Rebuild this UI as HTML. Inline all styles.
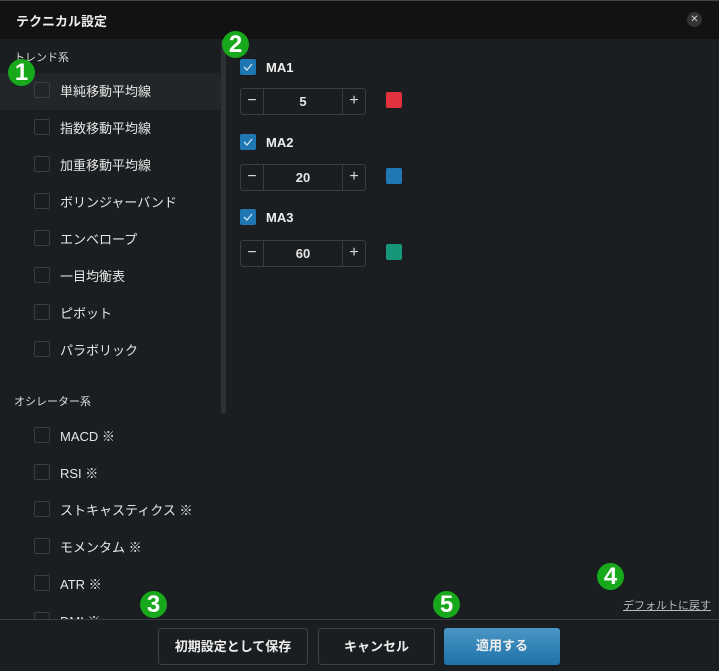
<!DOCTYPE html><html><head><meta charset="utf-8"><style>
*{box-sizing:border-box;margin:0;padding:0}
body{width:719px;height:671px;background:#1b1e20;font-family:"Liberation Sans","Noto Sans CJK JP",sans-serif;color:#e6e6e6;position:relative;overflow:hidden;font-size:13px}
.hdr{position:absolute;left:0;top:0;width:719px;height:39px;background:#121212;border-top:1px solid #444}
.hdr .t{position:absolute;left:16px;top:10px;font-size:13px;font-weight:bold;color:#eee}
.x{position:absolute;left:687px;top:11px;width:15px;height:15px;border-radius:50%;background:#333;color:#ccc;font-size:10px;line-height:15px;text-align:center}
.sec{position:absolute;left:14px;font-size:11px;color:#ddd}
.row{position:absolute;left:0;width:221px;height:37px}
.row .cb{position:absolute;left:34px;top:9px;width:16px;height:16px;border:1px solid #3a3d40;border-radius:2px}
.row .l{position:absolute;left:60px;top:8px;font-size:13px;color:#e6e6e6}
.sb{position:absolute;left:221px;top:40px;width:5px;height:373px;background:#2e3133}
.ck{position:absolute;left:240px;width:16px;height:16px;background:#1f78b4;border-radius:2px}
.ck svg{position:absolute;left:3px;top:3px}
.ma{position:absolute;left:266px;font-size:13px;font-weight:bold;color:#eee}
.st{position:absolute;left:240px;width:126px;height:27px;border:1px solid #3a3d40;border-radius:3px}
.st .m,.st .p{position:absolute;top:0;width:23px;height:25px;line-height:24px;text-align:center;font-size:16px;color:#ddd}
.st .m{left:0;border-right:1px solid #3a3d40}.st .p{right:0;border-left:1px solid #3a3d40}
.st .v{position:absolute;left:23px;right:23px;top:0;line-height:25px;text-align:center;font-weight:bold;font-size:13px}
.sw{position:absolute;left:386px;width:16px;height:16px;border-radius:2px}
.ft{position:absolute;left:0;top:619px;width:719px;height:52px;background:#1b1e20;border-top:1px solid #3a3d40}
.btn{position:absolute;top:628px;height:37px;border:1px solid #3f4245;border-radius:3px;line-height:35px;text-align:center;font-weight:bold;font-size:13px;color:#eee}
.g{position:absolute;width:27px;height:27px;border-radius:50%;background:#17a81c;color:#fff;font-weight:bold;font-size:24px;line-height:27px;text-align:center}
.df{position:absolute;left:623px;top:597px;font-size:11px;color:#bbb;text-decoration:underline}
</style></head><body>
<div class="hdr"><div class="t">テクニカル設定</div><div class="x">✕</div></div>
<div class="sec" style="top:49px">トレンド系</div>
<div class="row" style="top:73px;background:#232628"><div class="cb"></div><div class="l">単純移動平均線</div></div>
<div class="row" style="top:110px"><div class="cb"></div><div class="l">指数移動平均線</div></div>
<div class="row" style="top:147px"><div class="cb"></div><div class="l">加重移動平均線</div></div>
<div class="row" style="top:184px"><div class="cb"></div><div class="l">ボリンジャーバンド</div></div>
<div class="row" style="top:221px"><div class="cb"></div><div class="l">エンベロープ</div></div>
<div class="row" style="top:258px"><div class="cb"></div><div class="l">一目均衡表</div></div>
<div class="row" style="top:295px"><div class="cb"></div><div class="l">ピボット</div></div>
<div class="row" style="top:332px"><div class="cb"></div><div class="l">パラボリック</div></div>
<div class="sec" style="top:393px">オシレーター系</div>
<div class="row" style="top:418px"><div class="cb"></div><div class="l">MACD ※</div></div>
<div class="row" style="top:455px"><div class="cb"></div><div class="l">RSI ※</div></div>
<div class="row" style="top:492px"><div class="cb"></div><div class="l">ストキャスティクス ※</div></div>
<div class="row" style="top:529px"><div class="cb"></div><div class="l">モメンタム ※</div></div>
<div class="row" style="top:566px"><div class="cb"></div><div class="l">ATR ※</div></div>
<div class="row" style="top:603px"><div class="cb"></div><div class="l">DMI ※</div></div>
<div class="sb"></div>
<div class="ck" style="top:59px"><svg width="10" height="10"><path d="M1 5l3 3 5-6" fill="none" stroke="#cfe3f0" stroke-width="1.3"/></svg></div><div class="ma" style="top:60px">MA1</div>
<div class="st" style="top:88px"><div class="m">−</div><div class="v">5</div><div class="p">+</div></div><div class="sw" style="top:92px;background:#e3313d"></div>
<div class="ck" style="top:134px"><svg width="10" height="10"><path d="M1 5l3 3 5-6" fill="none" stroke="#cfe3f0" stroke-width="1.3"/></svg></div><div class="ma" style="top:135px">MA2</div>
<div class="st" style="top:164px"><div class="m">−</div><div class="v">20</div><div class="p">+</div></div><div class="sw" style="top:168px;background:#1f78b4"></div>
<div class="ck" style="top:209px"><svg width="10" height="10"><path d="M1 5l3 3 5-6" fill="none" stroke="#cfe3f0" stroke-width="1.3"/></svg></div><div class="ma" style="top:210px">MA3</div>
<div class="st" style="top:240px"><div class="m">−</div><div class="v">60</div><div class="p">+</div></div><div class="sw" style="top:244px;background:#17977a"></div>
<div class="ft"></div>
<div class="df">デフォルトに戻す</div>
<div class="btn" style="left:158px;width:150px">初期設定として保存</div>
<div class="btn" style="left:318px;width:117px">キャンセル</div>
<div class="btn" style="left:444px;width:116px;border:none;background:linear-gradient(#4a96c6,#1f72a8)">適用する</div>
<div class="g" style="left:8px;top:59px">1</div>
<div class="g" style="left:222px;top:31px">2</div>
<div class="g" style="left:140px;top:591px">3</div>
<div class="g" style="left:597px;top:563px">4</div>
<div class="g" style="left:433px;top:591px">5</div>
</body></html>
